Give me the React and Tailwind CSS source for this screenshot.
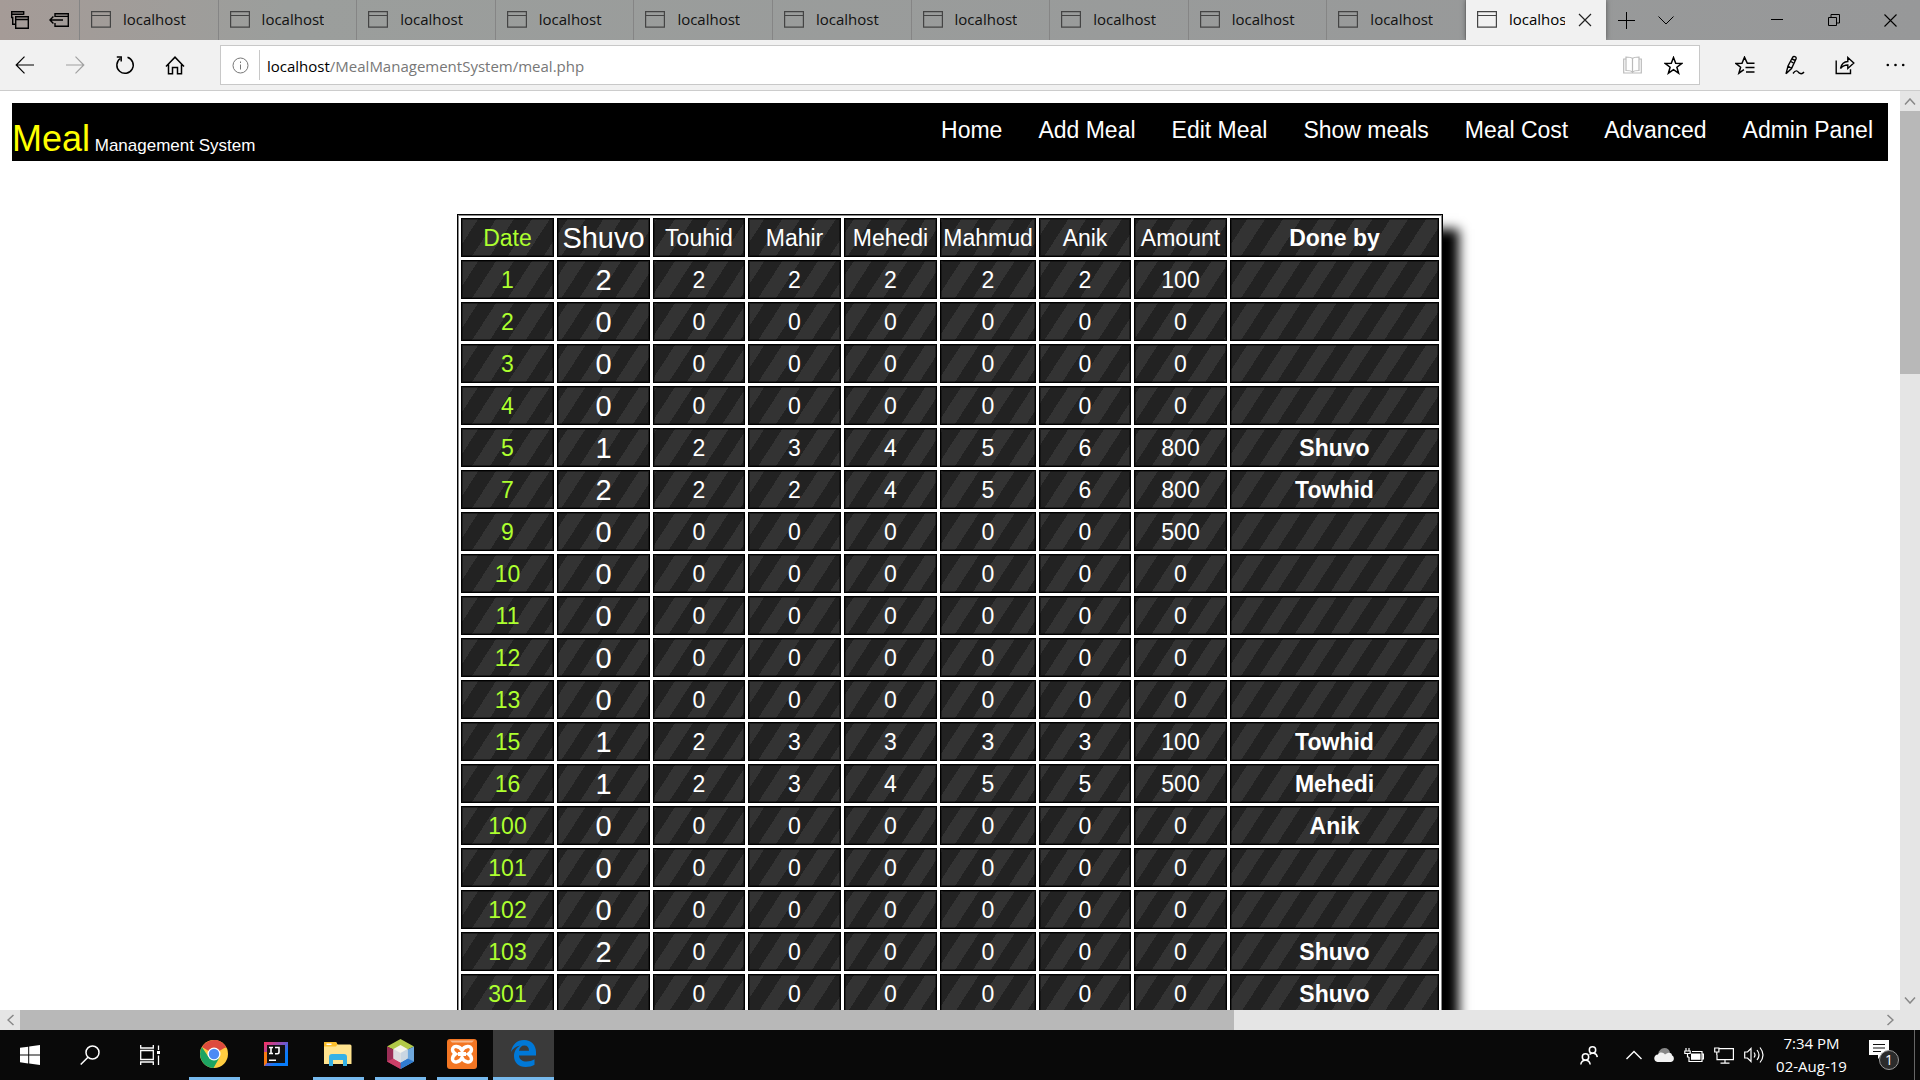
import React from "react";

const TABS = Array.from({ length: 10 }, () => "localhost");
const NAV = ["Home", "Add Meal", "Edit Meal", "Show meals", "Meal Cost", "Advanced", "Admin Panel"];
const COLUMNS = ["Date", "Shuvo", "Touhid", "Mahir", "Mehedi", "Mahmud", "Anik", "Amount", "Done by"];
const ROWS = [
  ["1", "2", "2", "2", "2", "2", "2", "100", ""],
  ["2", "0", "0", "0", "0", "0", "0", "0", ""],
  ["3", "0", "0", "0", "0", "0", "0", "0", ""],
  ["4", "0", "0", "0", "0", "0", "0", "0", ""],
  ["5", "1", "2", "3", "4", "5", "6", "800", "Shuvo"],
  ["7", "2", "2", "2", "4", "5", "6", "800", "Towhid"],
  ["9", "0", "0", "0", "0", "0", "0", "500", ""],
  ["10", "0", "0", "0", "0", "0", "0", "0", ""],
  ["11", "0", "0", "0", "0", "0", "0", "0", ""],
  ["12", "0", "0", "0", "0", "0", "0", "0", ""],
  ["13", "0", "0", "0", "0", "0", "0", "0", ""],
  ["15", "1", "2", "3", "3", "3", "3", "100", "Towhid"],
  ["16", "1", "2", "3", "4", "5", "5", "500", "Mehedi"],
  ["100", "0", "0", "0", "0", "0", "0", "0", "Anik"],
  ["101", "0", "0", "0", "0", "0", "0", "0", ""],
  ["102", "0", "0", "0", "0", "0", "0", "0", ""],
  ["103", "2", "0", "0", "0", "0", "0", "0", "Shuvo"],
  ["301", "0", "0", "0", "0", "0", "0", "0", "Shuvo"],
];

function Svg({ w = 20, h = 20, children, className = "", sw = 1 }) {
  return (
    <svg
      width={w}
      height={h}
      viewBox={`0 0 ${w} ${h}`}
      fill="none"
      stroke="currentColor"
      strokeWidth={sw}
      className={`shrink-0 ${className}`}
      aria-hidden="true"
    >
      {children}
    </svg>
  );
}

const PageIcon = () => (
  <Svg w={20} h={17} className="text-[#444]" sw={1.2}>
    <path d="M.6 .6h18.8v15.6H.6zM.6 4.5h18.8" />
  </Svg>
);

function TabStrip() {
  return (
    <div className="flex h-10 shrink-0 bg-gradient-to-r from-[#a59b97] via-[#9b9e9c] via-15% to-[#979899]">
      <div className="flex w-20 shrink-0 items-center border-r border-[#858585]">
        <button aria-label="Tabs set aside" className="flex w-10 items-center justify-center">
          <Svg w={18} h={18} sw={1.4}>
            <path d="M4 13.3H1.7V6.5H.7V.7h12v3M.7 3.2h12M4.7 5.7h12.6v11.6H4.7zM4.7 8.5h12.6" />
          </Svg>
        </button>
        <button aria-label="Set these tabs aside" className="flex w-10 items-center justify-center">
          <Svg w={20} h={14} sw={1.4}>
            <path d="M6 4V.8h13.3v12.4H6V10M6 3.4h13.3M14 7H1M4.4 3.6 1 7l3.4 3.4" />
          </Svg>
        </button>
      </div>
      <div role="tablist" className="flex min-w-0 flex-1">
        {TABS.map((t, i) => (
          <button
            key={i}
            role="tab"
            className="flex min-w-0 flex-1 items-center gap-3 border-r border-[#858585] pb-px pl-[11px] text-[15px] text-[#111]"
          >
            <PageIcon />
            <span className="truncate">{t}</span>
          </button>
        ))}
      </div>
      <div className="flex w-[140px] shrink-0 items-center bg-[#f1f1f1] pb-px pl-[11px] shadow-[0_0_5px_#555]">
        <button role="tab" aria-selected="true" className="flex items-center gap-3 text-[15px]">
          <PageIcon />
          <span className="block w-14 overflow-hidden whitespace-nowrap">localhost</span>
        </button>
        <button aria-label="Close tab" className="ml-[13px]">
          <Svg w={14} h={14} sw={1.2} className="text-[#222]">
            <path d="m1 1 12 12M13 1 1 13" />
          </Svg>
        </button>
      </div>
      <div className="flex flex-none items-center">
        <button aria-label="New tab" className="flex h-10 w-10 items-center justify-center">
          <Svg w={17} h={17}><path d="M8.5 0v17M0 8.5h17" /></Svg>
        </button>
        <button aria-label="Show tab previews" className="flex h-10 w-10 items-center justify-center">
          <Svg w={16} h={9}><path d="m.5.5 7.5 7.5L15.500.5" /></Svg>
        </button>
      </div>
      <div className="ml-[62px] flex flex-none pr-px">
        <button aria-label="Minimize" className="flex h-10 w-[57px] items-center justify-center">
          <Svg w={12} h={12}><path d="M0 5.500h12" /></Svg>
        </button>
        <button aria-label="Restore" className="flex h-10 w-[57px] items-center justify-center">
          <Svg w={12} h={12}><path d="M.5 3.500h8v8h-8zM3 3V.5h8.500v8.500H9" /></Svg>
        </button>
        <button aria-label="Close window" className="flex h-10 w-[57px] items-center justify-center">
          <Svg w={13} h={13} sw={1.1}><path d="m.5.5 12 12M12.500.5l-12 12" /></Svg>
        </button>
      </div>
    </div>
  );
}

function Toolbar() {
  return (
    <div className="flex h-[51px] shrink-0 items-center border-b border-[#ccc] bg-[#f1f1f1]">
      <div className="flex w-[220px] shrink-0 items-center">
        <button aria-label="Back" className="flex w-[50px] justify-center">
          <Svg w={20} h={18} sw={1.2}><path d="M19 9H1M9.500.7 1.200 9l8.300 8.300" /></Svg>
        </button>
        <button aria-label="Forward" className="flex w-[50px] justify-center text-[#a0a0a0]">
          <Svg w={20} h={18} sw={1.2}><path d="M1 9h18M10.500.7 18.800 9l-8.300 8.300" /></Svg>
        </button>
        <button aria-label="Refresh" className="flex w-[50px] justify-center">
          <Svg w={20} h={20} sw={1.500}>
            <path d="M12.500 2.300a8.200 8.200 0 1 1-7.300 1.200M1.800 2h4.400v4.600" />
          </Svg>
        </button>
        <button aria-label="Home" className="flex w-[50px] justify-center">
          <Svg w={20} h={19} sw={1.500}>
            <path d="M1 10.500 10 1.200l9 9.300M3.500 8.500v9.300h4V11.500h5v6.300h4V8.500" />
          </Svg>
        </button>
      </div>
      <div className="flex h-10 min-w-0 flex-1 items-center border border-[#c8c8c8] bg-white">
        <button aria-label="Site information" className="flex w-[38px] justify-center text-[#777]">
          <Svg w={17} h={17}>
            <circle cx="8.500" cy="8.500" r="7.500" />
            <path d="M8.500 7.500v5M8.500 4.500v1.500" />
          </Svg>
        </button>
        <div className="flex h-[30px] min-w-0 flex-1 items-center border-l border-[#c8c8c8] pt-0.5 pl-[7px] text-[15px] text-[#777]">
          <span className="text-black">localhost</span>/MealManagementSystem/meal.php
        </div>
        <button aria-label="Reading view" className="mr-[22px] text-[#bbb]">
          <Svg w={19} h={18} sw={1.200}>
            <path d="M9.500 2.500v13M9.500 2.500C8 1 5 1 3 1v13.500c3 0 5 0 6.500 1.500 1.500-1.500 3.500-1.500 6.500-1.500V1c-2 0-5 0-6.500 1.500M3 3H.7v14h17.600V3H16" />
          </Svg>
        </button>
        <button aria-label="Add to favorites" className="mr-4">
          <Svg w={19} h={19} sw={1.500}>
            <path d="m9.500 1.500 2.200 5.800 6 .2-4.800 3.700 1.700 6-5.100-3.500-5.100 3.500 1.700-6L1.300 7.500l6-.2z" />
          </Svg>
        </button>
      </div>
      <div className="flex w-[220px] shrink-0 items-center justify-end">
        <button aria-label="Hub" className="flex w-[50px] justify-center">
          <Svg w={20} h={19} sw={1.500}>
            <path d="M19.500 7.300h-7.200L9.500 1.200 7 7.300l-6 .2 4.600 3.700-1.700 6 5-3.600M10.500 11.500h9M11 16h8.500" />
          </Svg>
        </button>
        <button aria-label="Add notes" className="flex w-[50px] justify-center">
          <Svg w={20} h={20} sw={1.400}>
            <path d="M1 18.800 3 11 7.500 2.500C8.500.8 11.800 1.500 11 4L6.500 13.500 1 18.800M3 11l3.500 2.500M7 4l3.500 1.500M6 6.500l3 2M8 18.500c3.500-5 5-1.500 6.500-.3 1.500.8 3 .8 4.500-1.200" />
          </Svg>
        </button>
        <button aria-label="Share" className="flex w-[50px] justify-center">
          <Svg w={20} h={19} sw={1.400}>
            <path d="M1.200 4.500v13h14.300v-4.200M5.500 12.500C6.500 8 9 5.500 12.800 5.500v-4L18.800 7l-6 5.500V9C9.500 9 7.500 10 5.500 12.500z" />
          </Svg>
        </button>
        <button aria-label="Settings and more" className="flex w-[50px] justify-center">
          <Svg w={19} h={4} className="fill-black stroke-none">
            <circle cx="1.800" cy="2" r="1.300" /><circle cx="9.500" cy="2" r="1.300" /><circle cx="17.200" cy="2" r="1.300" />
          </Svg>
        </button>
      </div>
    </div>
  );
}

function cellStyle(i) {
  if (i === 0) return "text-[23px] font-normal text-[#adff2f]";
  if (i === 1) return "text-[29px] font-normal text-white";
  if (i === 8) return "text-[23px] font-bold text-white";
  return "text-[23px] font-normal text-white";
}

const CELL = "h-[39px] border border-black px-0 pt-0.5 pb-0 text-center leading-[35px] shadow-[inset_0_0_0_1px_rgba(0,0,0,0.4)] ";
const STRIPES = "bg-[repeating-linear-gradient(123deg,#333_0px,#333_15px,#222_15px,#222_30px)]";

function MealTable() {
  return (
    <table className="mx-auto mt-[53px] w-[986px] table-fixed border-separate border-spacing-[3px] border border-black bg-white shadow-[inset_0_0_0_1px_#888,16px_15px_11px_#000]">
      <colgroup>
        <col className="w-[93px]" />
        <col className="w-[93px]" />
        <col className="w-[92px]" />
        <col className="w-[93px]" />
        <col className="w-[93px]" />
        <col className="w-[96px]" />
        <col className="w-[92px]" />
        <col className="w-[93px]" />
        <col />
      </colgroup>
      <thead>
        <tr className={STRIPES}>
          {COLUMNS.map((c, i) => (
            <th key={c} scope="col" className={CELL + cellStyle(i)}>{c}</th>
          ))}
        </tr>
      </thead>
      <tbody>
        {ROWS.map((row) => (
          <tr key={row[0]} className={STRIPES}>
            {row.map((v, i) => (
              <td key={i} className={CELL + cellStyle(i)}>{v}</td>
            ))}
          </tr>
        ))}
      </tbody>
    </table>
  );
}

function MealPage() {
  return (
    <main className="min-h-0 min-w-0 flex-1 overflow-hidden bg-white px-3 pt-3 font-['Liberation_Sans',Arial,sans-serif]">
      <header className="flex h-[58px] items-start justify-between bg-black text-white">
        <a href="#home" className="pt-4 text-[17px] leading-10">
          <span className="text-4xl leading-10 text-[#ff0]">Meal</span> Management System
        </a>
        <nav className="flex gap-9 pt-[9px] pr-[15px] text-[23px] leading-9">
          {NAV.map((n) => (
            <a key={n} href={"#" + n}>{n}</a>
          ))}
        </nav>
      </header>
      <MealTable />
    </main>
  );
}

function Taskbar() {
  const app = "flex h-full w-[62px] shrink-0 flex-col items-center";
  const line = "h-[3px] w-[51px] bg-[#76b9ed]";
  return (
    <footer className="flex h-[50px] shrink-0 items-center bg-[#090909] text-white">
      <button aria-label="Start" className="flex w-[60px] justify-center">
        <Svg w={20} h={20} className="fill-white stroke-none">
          <path d="M0 2.800 8.200 1.700v7.900H0zM9.200 1.500 20 0v9.600H9.200zM0 10.500h8.200v7.900L0 17.200zM9.200 10.500H20V20L9.200 18.500z" />
        </Svg>
      </button>
      <button aria-label="Search" className="flex w-[60px] justify-center">
        <Svg w={20} h={20} sw={1.500}><circle cx="12.500" cy="7.500" r="6.500" /><path d="M8 12.200.7 19.500" /></Svg>
      </button>
      <button aria-label="Task View" className="mr-[3px] flex w-[60px] justify-center">
        <Svg w={20} h={20} sw={1.300}>
          <path d="M.7 5.500h12.600v9H.7zM.7 0v3h12.600V0M.7 20v-3h12.600v3M18.500.5v4.500M18.500 10.500V20" />
          <path d="M17 6h3v3h-3z" fill="currentColor" stroke="none" />
        </Svg>
      </button>
      <button aria-label="Chrome" className={app}>
        <span className="flex flex-1 items-center">
          <Svg w={28} h={28} className="stroke-none">
            <circle cx="14" cy="14" r="14" fill="#ffcd40" />
            <path d="M14 14 1.900 7A14 14 0 0 1 26.100 7z" fill="#dd4b3e" />
            <path d="M14 0a14 14 0 0 1 12.100 7.500H14z" fill="#dd4b3e" />
            <path d="M1.900 7A14 14 0 0 0 13.500 28L19.500 17.500 8.500 17z" fill="#1da462" />
            <circle cx="14" cy="14" r="6.500" fill="#fff" />
            <circle cx="14" cy="14" r="5.200" fill="#4c8bf5" />
          </Svg>
        </span>
        <span className={line} />
      </button>
      <button aria-label="IntelliJ IDEA" className={app}>
        <span className="mb-[3px] flex flex-1 items-center">
          <Svg w={24} h={24} className="stroke-none">
            <defs>
              <linearGradient id="ij" x1="0" y1="0" x2="1" y2="1">
                <stop offset="0" stopColor="#fe315d" /><stop offset=".45" stopColor="#7a55c7" /><stop offset=".7" stopColor="#087cfa" />
              </linearGradient>
            </defs>
            <path d="M0 0h24v24H0z" fill="url(#ij)" />
            <path d="M0 10h3v11l-3 3z" fill="#f97a12" />
            <path d="M3 3h18v18H3z" fill="#111" />
            <path d="M5 5.500h4M7 5.500v6M5 11.500h4M11 5.500h4v4.500q0 1.700-1.700 1.700H11M5 18.300h7" stroke="#fff" strokeWidth="1.600" fill="none" />
          </Svg>
        </span>
      </button>
      <button aria-label="File Explorer" className={app}>
        <span className="flex flex-1 items-center">
          <Svg w={28} h={24} className="stroke-none">
            <path d="M0 1q0-1 1-1h11l1.500 2.500H26q1.500 0 1.500 1.500v18H0z" fill="#ffe38e" />
            <path d="M0 1q0-1 1-1h11l1.500 2.500L12 4.500H0z" fill="#fcbf2c" />
            <path d="M2.500 1.500h5v1.500h-5z" fill="#fff" />
            <path d="M5 24v-9q0-3 3-3h12q3 0 3 3v9h-4v-6H9v6z" fill="#35b1e6" />
          </Svg>
        </span>
        <span className={line} />
      </button>
      <button aria-label="NetBeans" className={app}>
        <span className="flex flex-1 items-center">
          <Svg w={27} h={30} className="stroke-none">
            <path d="M13.500 0 27 7.500 19.500 11l-6-3.500L7.500 11 0 7.500z" fill="#b1c948" />
            <path d="M0 7.500 7.500 11v8l6 3.500V30L0 22.500z" fill="#9b2e56" />
            <path d="M27 7.500 19.500 11v8l-6 3.500V30L27 22.500z" fill="#6fa8dc" />
            <path d="m27 22.500-7.500-3.500-6 3.500V30z" fill="#2f7bd0" />
            <path d="m0 22.500 7.500-3.500 6 3.500V30z" fill="#cc3f68" />
            <path d="m13.500 6 7 4v9.500l-7 4-7-4V10z" fill="#f4f4ec" />
            <path d="M13.500 14v9.500l-7-4V10z" fill="#dcdce0" />
            <path d="M20.500 10v9.500l-7 4V14z" fill="#c9d6e2" />
          </Svg>
        </span>
        <span className={line} />
      </button>
      <button aria-label="XAMPP" className={app}>
        <span className="flex flex-1 items-center">
          <Svg w={30} h={30} className="stroke-none">
            <rect width="30" height="30" rx="3" fill="#f37623" />
            <path d="M3 1.500h24l-2 2H5z" fill="#f9b98c" />
            <path d="M15 11.500C13 6.500 5.500 6 5.500 10.500c0 2.500 1.500 3.500 3 4.500-1.500 1-3 2.500-3 5 0 4.500 7.500 4 9.500-1.500 2 5.500 9.500 6 9.500 1.500 0-2.500-1.500-4-3-5 1.500-1 3-2 3-4.500C24.500 6 17 6.500 15 11.500z" stroke="#fff" strokeWidth="3.400" fill="none" />
            <path d="M11 15h8" stroke="#fff" strokeWidth="4" />
          </Svg>
        </span>
        <span className={line} />
      </button>
      <button aria-label="Microsoft Edge" className="flex h-full w-[61px] shrink-0 flex-col items-center bg-[#3a3a3a]">
        <span className="flex flex-1 items-center">
          <Svg w={25} h={27} className="stroke-none">
            <path
              d="M0 12C1.200 4.500 6 0 13 0c7.500 0 12 5.500 12 12v3.500H8c.2 4 3.500 6 7.500 6 3 0 5.500-.8 8-2.200v5.500C21 26.300 18 27 14.700 27 7.500 27 3 22.500 3 16c0-5 2.700-8.700 6.500-10.500C5 6 2 8.500 0 12zm8-1.300h10C18 7.500 16.500 5.500 13.300 5.500 10.500 5.500 8.600 7.500 8 10.700z"
              fill="#0078d7"
            />
          </Svg>
        </span>
        <span className="h-[3px] w-full bg-[#76b9ed]" />
      </button>
      <div className="ml-auto flex h-full items-center">
        <button aria-label="People" className="mr-7">
          <Svg w={18} h={19} sw={1.500}>
            <circle cx="12.500" cy="4" r="3.200" /><circle cx="5.500" cy="11" r="3.200" />
            <path d="M.8 18.500c.4-3 2.200-4.300 4.700-4.300s4.300 1.500 4.700 4.300M9.500 8.500c2-2 7-2 7.800 2.500" />
          </Svg>
        </button>
        <button aria-label="Show hidden icons" className="mr-3">
          <Svg w={16} h={10} sw={1.400}><path d="m.5 9 7.500-7.500L15.500 9" /></Svg>
        </button>
        <button aria-label="OneDrive" className="mr-[10px]">
          <Svg w={20} h={14} className="stroke-none">
            <path d="M4 8C4 3 7 0 10.500 0c3 0 5 2 5.500 4.500L8 10z" fill="#888" />
            <path d="M3.500 14C-1 13.500-.8 6.500 4 6.500c1.500-3 5.500-2.500 7 0C15 3.500 18 5 18 7.500c2.500.5 2.800 6-1 6.500z" fill="#f2f2f2" />
          </Svg>
        </button>
        <button aria-label="Battery" className="mr-[10px]">
          <Svg w={20} h={15} sw={1.200}>
            <path d="M5 9V13.500h13V3.500H8M18 6h1.400v5H18M2 0v3M5 0v3M.8 3h5.400v2.500H.8zM3.500 5.500V9H5" />
            <path d="M7 5.500h9.500v6.300H7z" fill="currentColor" stroke="none" />
          </Svg>
        </button>
        <button aria-label="Network" className="mr-[10px]">
          <Svg w={20} h={17} sw={1.200}>
            <path d="M5 1.600h14.400v11H3V8M11 12.600v3.500M6.500 16.200h9M.7 1h4.200v4H.7zM2.800 5v3" />
          </Svg>
        </button>
        <button aria-label="Volume" className="mr-3">
          <Svg w={20} h={18} sw={1.200}>
            <path d="M.7 6h2.800L7 2.500v13L3.500 12H.7zM10 6.500q2 2.500 0 5M13 4q4 5 0 10M16 1.500q6 7.500 0 15" />
          </Svg>
        </button>
        <div className="w-[71px] text-center text-[15px] leading-[23px] whitespace-nowrap">
          <div>7:34 PM</div>
          <div>02-Aug-19</div>
        </div>
        <button aria-label="Notifications" className="relative mr-[15px] ml-[22px] h-[30px] w-[30px]">
          <Svg w={20} h={20} className="absolute top-0 left-0">
            <path d="M0 0h20v15h-7l-4 4v-4H0z" fill="#fff" stroke="none" />
            <path d="M4 4.500h12M4 8h12M4 11.500h8" stroke="#111" strokeWidth="1.200" />
          </Svg>
          <span className="absolute right-0 bottom-0 flex h-5 w-5 items-center justify-center rounded-full border border-[#999] bg-[#2b2b2b] text-sm">1</span>
        </button>
        <button aria-label="Show desktop" className="h-full w-[6px] border-l border-[#666]" />
      </div>
    </footer>
  );
}

export default function App() {
  return (
    <div className="flex h-screen flex-col overflow-hidden bg-white font-['Open_Sans','Noto_Sans',sans-serif] text-black">
      <TabStrip />
      <Toolbar />
      <div className="flex min-h-0 flex-1">
        <MealPage />
        <div className="flex w-5 shrink-0 flex-col items-center justify-between bg-[#e5e5e5] text-[#888]">
          <div className="flex h-5 items-center"><Svg w={12} h={7} sw={1.500}><path d="m1 6.500 5-5.500 5 5.500" /></Svg></div>
          <div className="w-full basis-[263px] bg-[#b8b8b8]" />
          <div className="flex flex-1 items-end pb-[6px]"><Svg w={12} h={7} sw={1.500}><path d="m1 .5 5 5.500 5-5.500" /></Svg></div>
        </div>
      </div>
      <div className="flex h-5 shrink-0 items-center bg-[#e5e5e5] text-[#888]">
        <div className="flex w-5 justify-center"><Svg w={7} h={12} sw={1.500}><path d="M6.500 1 1 6l5.500 5" /></Svg></div>
        <div className="h-full basis-[1214px] bg-[#b8b8b8]" />
        <Svg w={7} h={12} sw={1.500} className="mr-[26px] ml-auto"><path d="m.5 1 5.500 5-5.500 5" /></Svg>
      </div>
      <Taskbar />
    </div>
  );
}
